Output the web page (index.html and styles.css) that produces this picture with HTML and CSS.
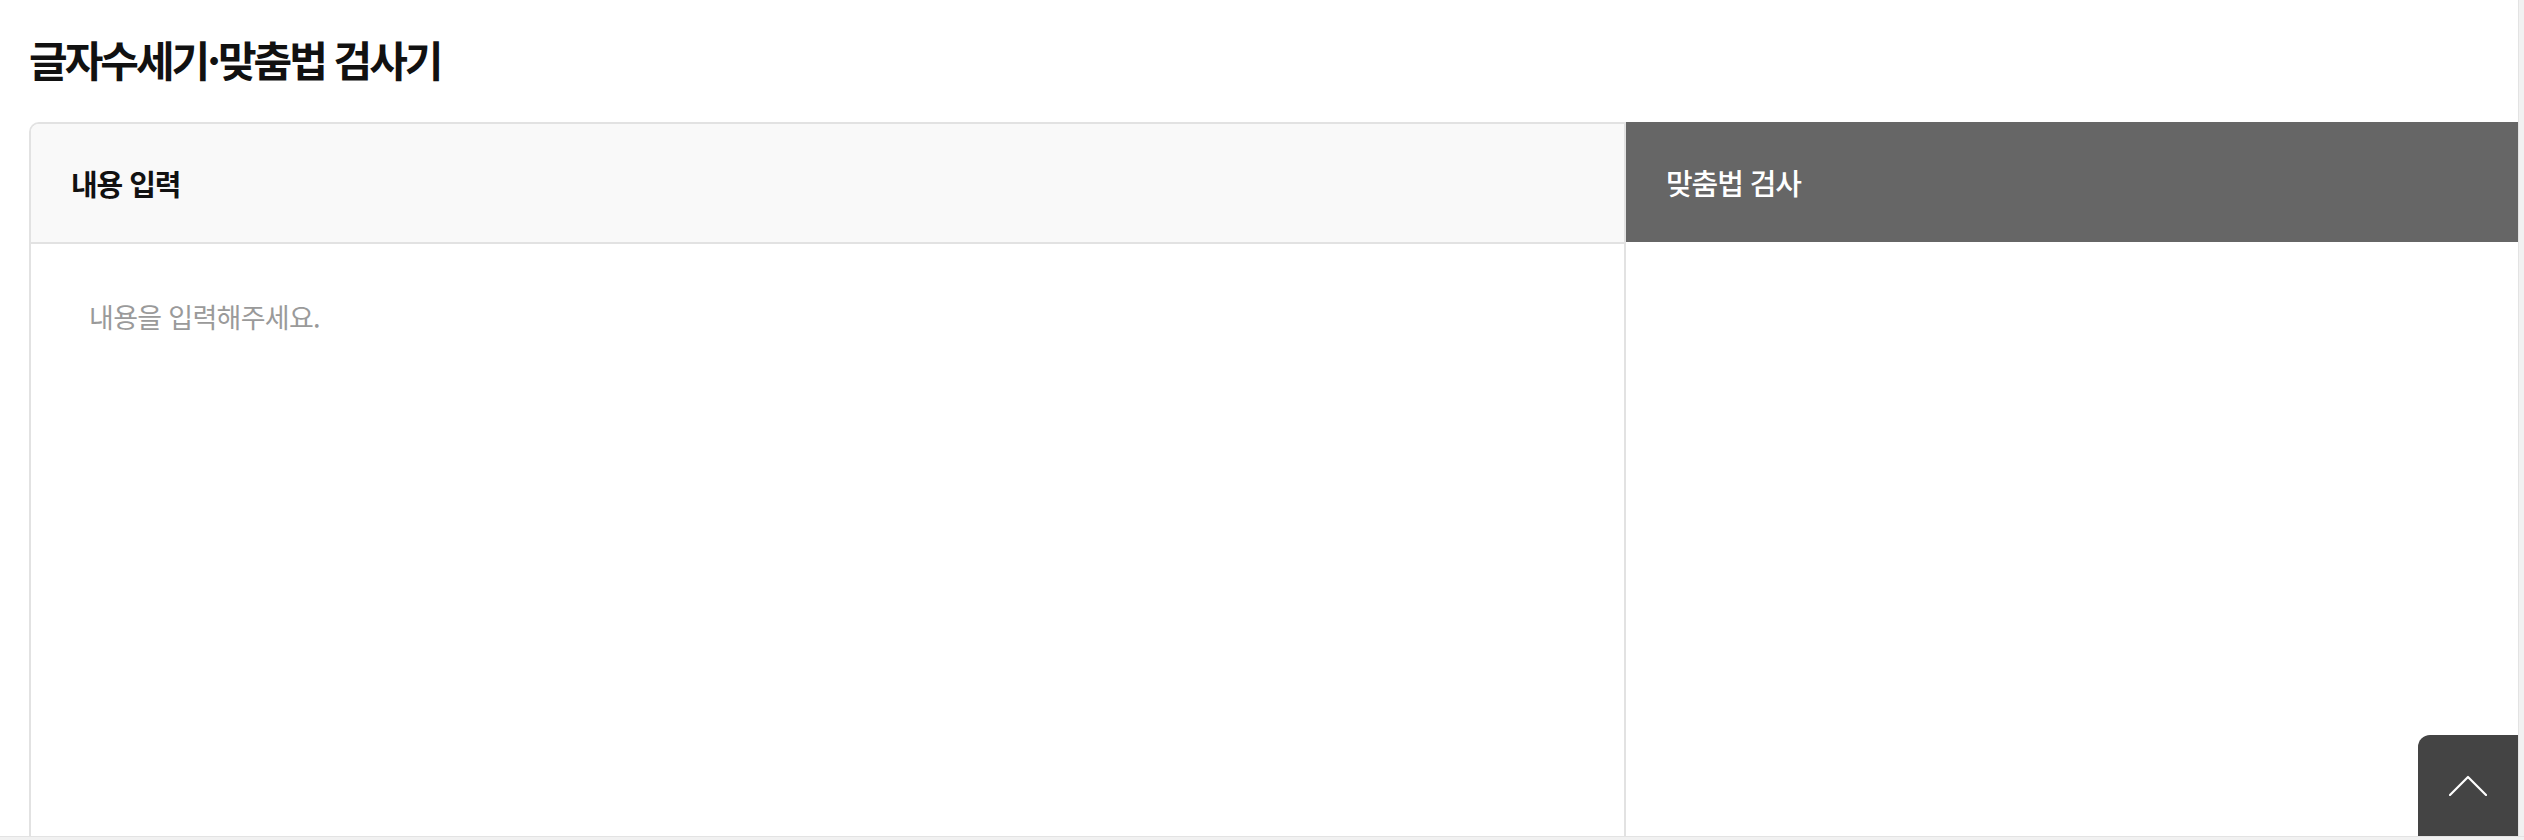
FILE: index.html
```html
<!DOCTYPE html>
<html lang="ko">
<head>
<meta charset="utf-8">
<title>글자수세기·맞춤법 검사기</title>
<link rel="stylesheet" href="styles.css">
</head>
<body>
<main class="page">
  <h1 class="page-title">글자수세기·맞춤법 검사기</h1>
  <section class="checker">
    <div class="panel panel-input">
      <div class="panel-head">내용 입력</div>
      <div class="panel-body">
        <textarea class="editor" placeholder="내용을 입력해주세요."></textarea>
      </div>
    </div>
    <div class="panel panel-result">
      <div class="panel-head">맞춤법 검사</div>
      <div class="panel-body"></div>
    </div>
  </section>
</main>
<button class="to-top" type="button" aria-label="맨 위로">
  <svg width="38" height="21" viewBox="0 0 38 21" fill="none" stroke="#fff" stroke-width="2.2" stroke-linecap="round" stroke-linejoin="round"><path d="M1 20 L19 2 L37 20"/></svg>
</button>
<div class="scroll-track scroll-track-v"></div>
<div class="scroll-track scroll-track-h"></div>
</body>
</html>
```
FILE: styles.css
```css
html, body {
  margin: 0;
  padding: 0;
  background: #fff;
  overflow: hidden;
  height: 100%;
}
body {
  font-family: "Noto Sans CJK KR", "Noto Sans", sans-serif;
  color: #111;
}
.page {
  padding: 0 0 0 29px;
}
.page-title {
  margin: 0;
  padding-top: 34px;
  font-size: 42px;
  line-height: 50px;
  font-weight: 700;
  letter-spacing: -3px;
  color: #111;
}
.checker {
  display: flex;
  margin-top: 38px;
  height: 800px;
}
.panel {
  box-sizing: border-box;
  display: flex;
  flex-direction: column;
}
.panel-input {
  width: 1597px;
  flex: none;
  border: 2px solid #e2e2e2;
  border-radius: 10px 0 0 0;
}
.panel-result {
  flex: 1;
}
.panel-head {
  box-sizing: border-box;
  display: flex;
  align-items: center;
  padding: 0 40px;
  font-size: 29px;
  font-weight: 500;
  letter-spacing: -1.1px;
}
.panel-input .panel-head {
  height: 120px;
  background: #f9f9f9;
  border-bottom: 2px solid #e2e2e2;
  border-radius: 8px 0 0 0;
  color: #111;
  font-weight: 700;
}
.panel-result .panel-head {
  height: 120px;
  background: #666;
  color: #fff;
}
.panel-body {
  flex: 1;
  display: flex;
}
.editor {
  flex: 1;
  border: 0;
  outline: none;
  resize: none;
  margin: 0;
  padding: 52px 58px;
  font-family: "Noto Sans CJK KR", "Noto Sans", sans-serif;
  font-size: 27px;
  line-height: 42px;
  letter-spacing: -0.7px;
  color: #111;
  background: #fff;
}
.editor::placeholder {
  color: #9a9a9a;
}
.to-top {
  position: fixed;
  right: 6px;
  bottom: 4px;
  width: 100px;
  height: 101px;
  border: 0;
  padding: 0;
  margin: 0;
  background: #444;
  border-radius: 12px 0 0 0;
  display: flex;
  align-items: center;
  justify-content: center;
  cursor: pointer;
}
.scroll-track {
  position: fixed;
  background: #f1f1f1;
}
.scroll-track-v {
  top: 0;
  right: 0;
  width: 5px;
  bottom: 0;
  border-left: 1px solid #e3e3e3;
}
.scroll-track-h {
  left: 0;
  right: 0;
  bottom: 0;
  height: 3px;
  border-top: 1px solid #e3e3e3;
}
```
